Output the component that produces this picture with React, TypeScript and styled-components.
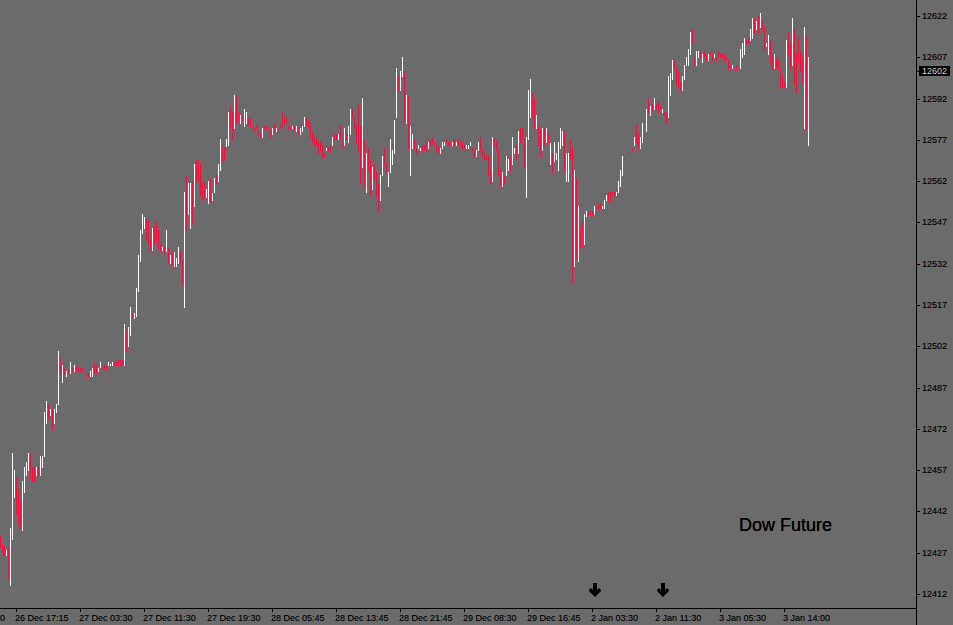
import React from 'react';
import styled, { createGlobalStyle } from 'styled-components';

const GlobalStyle = createGlobalStyle`
  html, body {
    margin: 0;
    padding: 0;
    background: #6b6b6b;
  }
`;

const Terminal = styled.div`
  position: relative;
  display: grid;
  grid-template-columns: 916px 37px;
  grid-template-rows: 608px 17px;
  width: 953px;
  height: 625px;
  overflow: hidden;
  background: #6b6b6b;
  color: #000;
  font-family: 'Liberation Sans', Arial, sans-serif;
  font-size: 9px;
  line-height: 11px;
  text-shadow: 0 0 0 rgba(0, 0, 0, 0.4);
`;

const Plot = styled.div`
  position: relative;
  grid-column: 1;
  grid-row: 1;
`;

const BarChart = styled.svg`
  display: block;
`;

const PriceAxis = styled.div`
  grid-column: 2;
  grid-row: 1 / 3;
  display: flex;
  flex-direction: column;
  justify-content: space-between;
  padding: 11px 0 25px;
  border-left: 1px solid #000;
  height: 625px;
  box-sizing: border-box;
  width: 37px;
`;

const PriceRow = styled.div`
  display: flex;
  align-items: center;
  gap: 2px;
  height: 11px;
`;

const PriceTick = styled.span`
  width: 3px;
  height: 1px;
  background: #000;
`;

const TimeAxis = styled.div`
  grid-column: 1;
  grid-row: 2;
  display: flex;
  border-top: 1px solid #000;
  margin-right: -1px;
  overflow: hidden;
`;

const TimeStub = styled.span`
  flex: 0 0 16px;
  width: 16px;
  padding-top: 4px;
  overflow: hidden;
`;

const TimeCell = styled.span`
  flex: 0 0 64px;
  position: relative;
  padding-top: 4px;
  white-space: nowrap;
  text-indent: -1px;

  &::before {
    content: '';
    position: absolute;
    left: 0;
    top: 0;
    width: 1px;
    height: 3px;
    background: #000;
  }
`;

const CurrentPrice = styled.span`
  position: absolute;
  top: 66px;
  left: 919px;
  width: 28px;
  height: 10px;
  padding-left: 3px;
  background: #000;
  color: #cfcfcf;
  line-height: 10px;
  text-shadow: none;
`;

const CurrentTick = styled.span`
  position: absolute;
  top: 71px;
  left: 917px;
  width: 2px;
  height: 1px;
  background: #000;
`;

const ChartLabel = styled.div`
  position: absolute;
  left: 739px;
  top: 515px;
  font-size: 18px;
  line-height: 21px;
  white-space: nowrap;
  text-shadow: 0 0 0 #000;
`;

const Marker = styled.svg<{ $left: number }>`
  position: absolute;
  left: ${(p) => p.$left}px;
  top: 583px;
`;

// top and bottom of each bar, in 3x crop pixels, bars sit 2px apart
const segments: { y: number; startX: number; data: string }[] = [
  {
    y: 330,
    startX: 0,
    data: `r618 654 r642 670 r648 678 w660 678 r652 752 w594 768 w369 630 w420 503 r444 555 r477 588 r510 597 w453 603
      w411 489 w396 438 w369 423 r369 447 r411 456 r411 456 w411 438 r411 438 w378 438 w378 414 w246 381 w213 282
      r222 267 w237 258 r237 300 w237 282 w222 249 w63 225 r81 132 w105 159 r114 132 w123 141 r123 132 w96 132
      r114 126 w105 126 r105 126 r114 126 r114 126 r114 126 r123 126 r129 141 r129 141 w123 141 w114 141 r96 132
      r105 129 w114 126 w96 114 r105 117 r105 117 r105 117 w96 108 w102 108 w96 108 r96 108 r96 108 r90 108 r90 108
      r90 108 w-18 108 r-3 66 w-9 51 w-69 18`,
  },
  {
    y: 80,
    startX: 132,
    data: `r699 714 w699 717 w624 712 w525 636 w450 546 w402 462 w411 447 r417 480 r417 495 r477 513 w444 513 r435 495
      r426 486 r450 510 r492 513 w501 513 r501 519 w450 516 r501 552 w525 552 r516 561 w516 561 w534 561 w501 552
      r510 552 r543 618 w336 684 r285 447 w309 405 w309 447 r303 429 w252 381 r237 306 r240 306 r252 348 r306 363
      r309 354 w327 354 w303 372 r294 366 w339 363 w294 339 r285 312 w252 306 w177 273 r195 246 r204 240 w177 201
      w96 198 r78 147 r96 180 w45 147 r45 132 r96 123 w105 132 r105 123 w87 141 w96 132 r111 138 r111 141 r138 141
      r144 156 r138 147 r153 165 r162 174 w144 174 r138 147 r138 147 r144 147 r150 174 w144 165 r129 156 w144 156
      r147 150 r138 147 r96 141 r111 132 r111 132 r138 147 r138 147 w138 147 r138 147 w138 156 r144 165 w144 165
      w138 156 w111 141 r111 138 r120 141 r138 174 r153 189 r171 198 r171 198 r186 222 r186 213 r195 231 r219 231
      w204 213 r204 213 r195 213 w171 198 r162 180 r162 180 w162 180 r138 180 r186 207 w144 198 r162 180 w138 189`,
  },
  {
    y: 50,
    startX: 350,
    data: `w177 255 r177 204 r201 237 r228 279 r162 303 r228 402 w144 354 r267 411 w309 429 r294 363 r327 438 w351 420
      r342 387 r366 444 r399 486 w375 453 w318 378 r294 345 r342 369 w366 411 w267 369 w300 345 w210 312 w54 204
      r78 123 w63 123 w21 81 r63 213 w135 222 r135 297 w228 378 w252 297 r267 297 r294 312 w285 297 w294 303 r285 303
      r285 297 r276 303 w276 297 r267 288 r261 279 r276 288 r285 303 r285 312 w294 312 w276 297 w276 288 r267 279
      r276 288 r276 288 w276 288 r267 288 w276 288 r267 288 r276 288 r276 297 r285 297 w285 297 w285 297 w276 288
      r294 303 r300 321 w300 321 w276 303 r261 303 r300 321 r309 330 r318 330 r318 378 r360 402 w261 396 r261 288
      r276 303 r300 378 r360 411 w366 411 r378 402 w318 378 w327 363 r318 363 w261 345 w294 312 r285 330 w243 312
      r234 279 r234 267 r267 354 w261 444 w120 270 w87 204 r129 204 r144 237 w195 237 r228 288 r237 321 w234 303
      r234 288 w234 279 r252 279 w279 345 r309 369 w276 336 w309 330 w276 363`,
  },
  {
    y: 0,
    startX: 560,
    data: `w384 447 w393 438 r393 513 w459 546 w459 546 r417 480 r444 852 w510 801 r534 777 w618 786 r675 744 r666 744
      w642 735 w633 651 r633 645 r633 645 r633 645 w618 645 r618 621 r609 627 r609 627 w618 627 w600 627 w585 603
      r576 603 r576 603 r576 588 r576 588 w576 588 w543 579 w510 561 w468 528 r477 480 r459 462 r459 462 r459 462
      r444 453 w411 438 r369 429 r402 447 w411 447 w369 429 r393 396 w327 396 r294 339 w318 348 r312 330 w294 330
      r312 330 r303 339 r318 330 w327 339 r336 348 r336 372 w228 354 w219 288 w180 240 r180 207 r204 255 r213 264
      r246 273 w228 273 w195 240 w171 198 w147 198 w96 165 r87 132 r171 198 w153 198 w153 174 r153 174 w162 189
      r153 171 r162 183 w162 183 r153 165 r162 183 w162 174 r171 183 r153 174 r162 174 r162 174 r162 183 r171 183
      r180 207 r195 207 w195 207 r204 207 r195 207 r204 207 w147 207 w129 174 w114 165 r120 132 r114 132 w87 123
      w54 117 r54 99 w63 90 r48 99 w39 84 r63 90 r81 150 w129 141 w105 165 r120 189 r162 207 w162 207 r171 207
      r180 207 r204 264 r228 264 r246 264 w120 264 r96 165 r129 207 w54 198 r87 255 r162 282 r114 189 r153 216
      r171 249 w81 387 r105 387 w171 438`,
  },
];

const bars = segments.flatMap(({ y, startX, data }) =>
  data
    .trim()
    .split(/\s+(?=[rw])/)
    .map((item, index) => {
      const [top, bottom] = item.slice(1).split(' ').map(Number);
      return {
        x: startX + index * 2,
        top: y + Math.round(top / 3),
        height: Math.max(1, Math.round((bottom - top) / 3)),
        fill: item[0] === 'r' ? '#e6143c' : '#ffffff',
      };
    }),
);

const prices = [12622, 12607, 12592, 12577, 12562, 12547, 12532, 12517, 12502, 12487, 12472, 12457, 12442, 12427, 12412];

const times = [
  '26 Dec 17:15',
  '27 Dec 03:30',
  '27 Dec 11:30',
  '27 Dec 19:30',
  '28 Dec 05:45',
  '28 Dec 13:45',
  '28 Dec 21:45',
  '29 Dec 08:30',
  '29 Dec 16:45',
  '2 Jan 03:30',
  '2 Jan 11:30',
  '3 Jan 05:30',
  '3 Jan 14:00',
];

function DownArrow({ left }: { left: number }) {
  return (
    <Marker $left={left} width="12" height="14" viewBox="0 0 12 14">
      <polygon points="4,0 8,0 8,7 10,5 12,7 12,8 6,14 0,8 0,7 2,5 4,7" fill="#000" />
    </Marker>
  );
}

export default function App() {
  return (
    <Terminal>
      <GlobalStyle />
      <Plot>
        <BarChart width="916" height="608" viewBox="0 0 916 608" shapeRendering="crispEdges">
          {bars.map((bar) => (
            <rect key={bar.x} x={bar.x} y={bar.top} width="1" height={bar.height} fill={bar.fill} />
          ))}
        </BarChart>
        <ChartLabel>Dow Future</ChartLabel>
        <DownArrow left={589} />
        <DownArrow left={657} />
      </Plot>
      <PriceAxis>
        {prices.map((price) => (
          <PriceRow key={price}>
            <PriceTick />
            {price}
          </PriceRow>
        ))}
      </PriceAxis>
      <TimeAxis>
        <TimeStub>0</TimeStub>
        {times.map((time) => (
          <TimeCell key={time}>{time}</TimeCell>
        ))}
      </TimeAxis>
      <CurrentTick />
      <CurrentPrice>12602</CurrentPrice>
    </Terminal>
  );
}
